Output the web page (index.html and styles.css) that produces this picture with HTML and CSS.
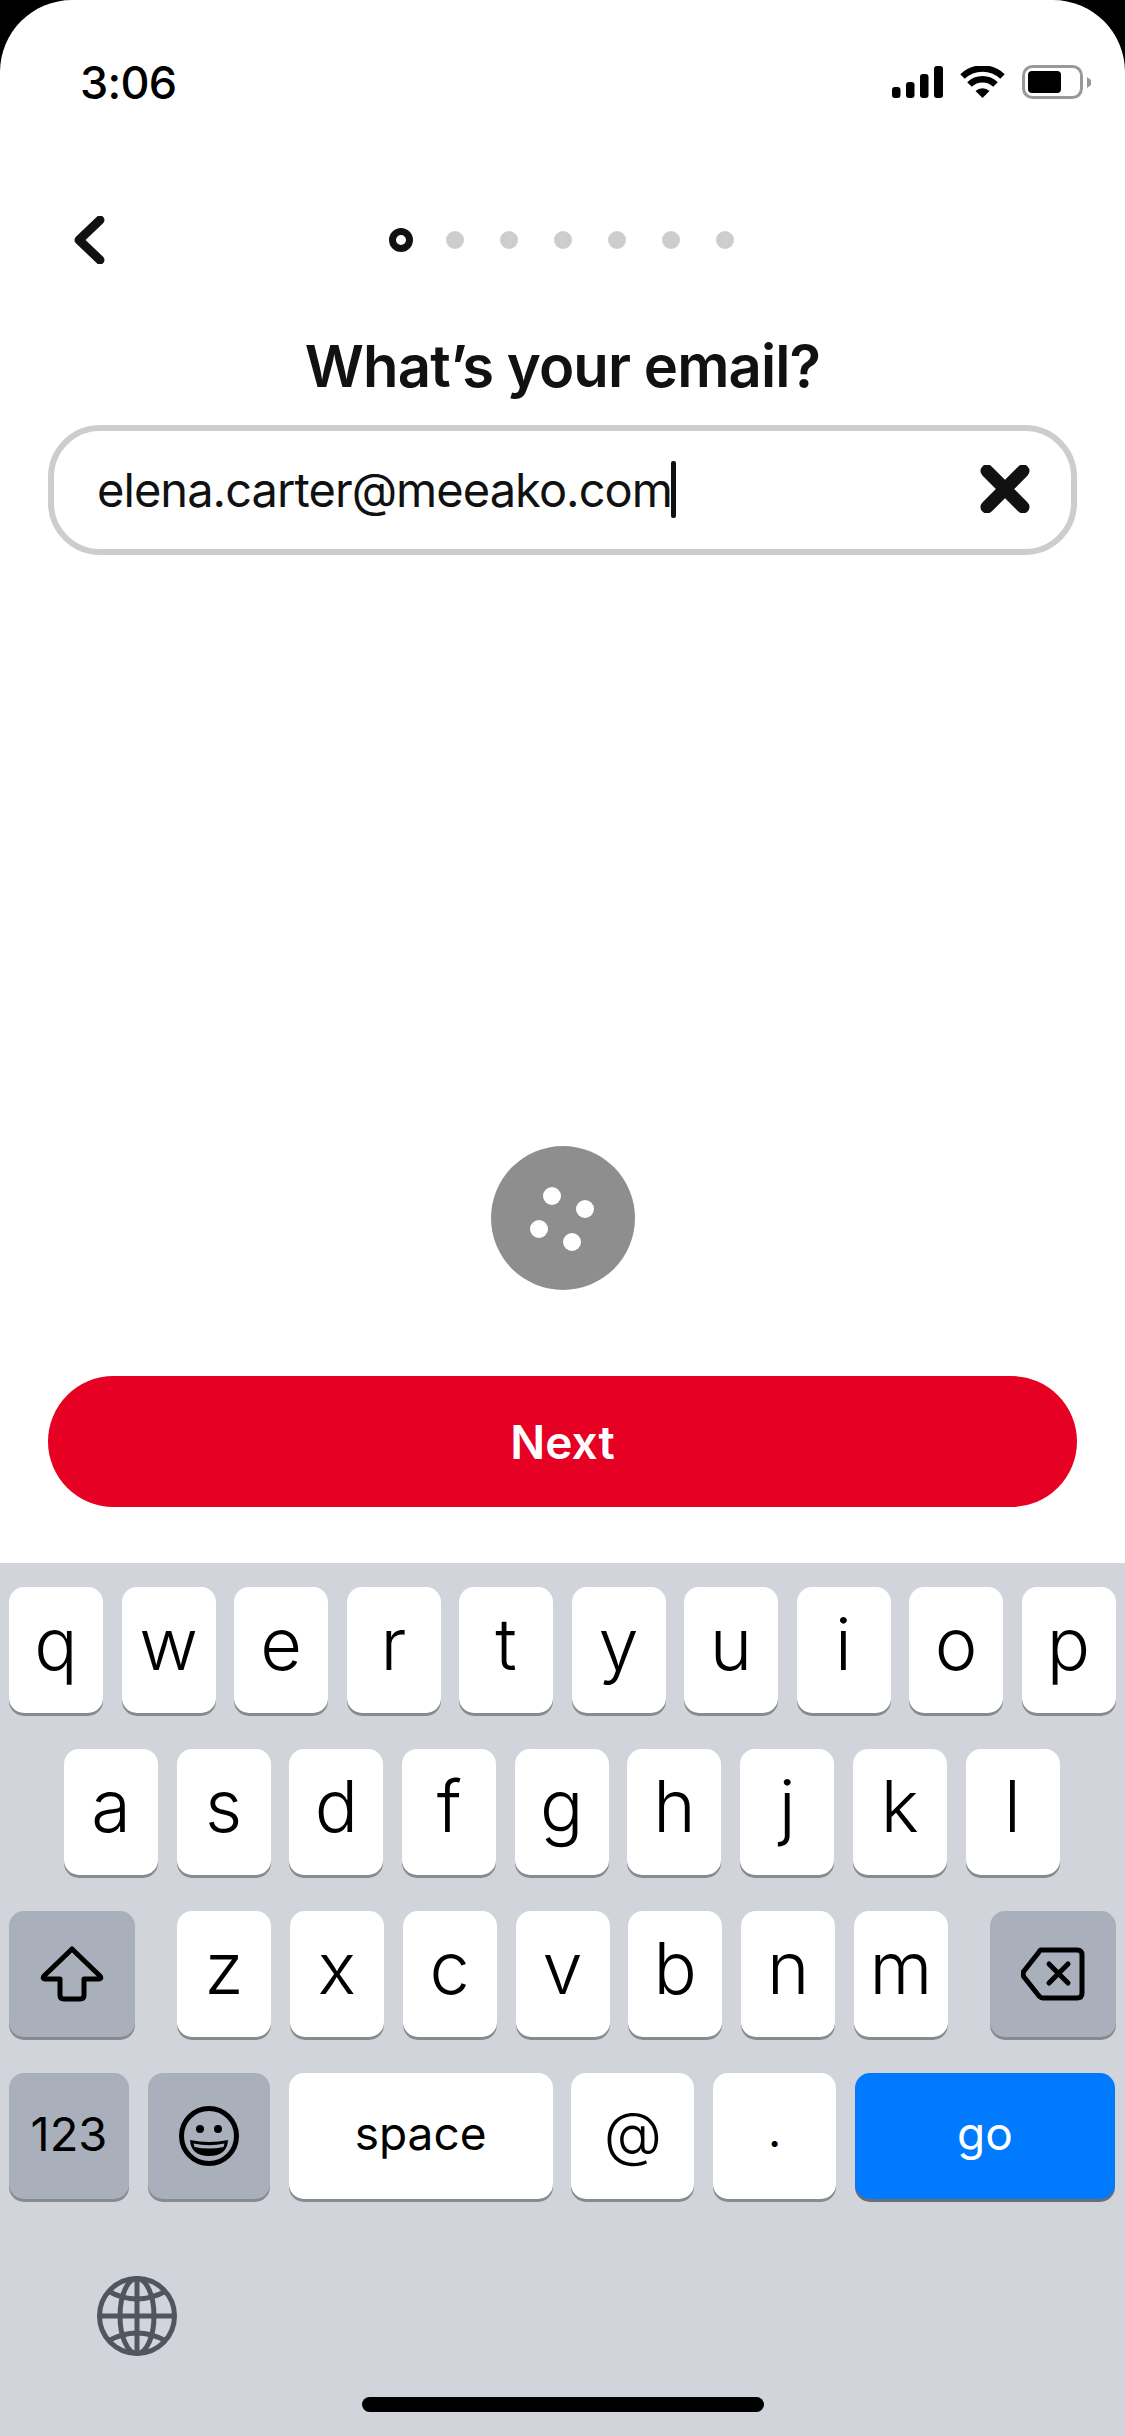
FILE: index.html
```html
<!DOCTYPE html>
<html>

<head>
    <title>What's your email?</title>
    <link rel="stylesheet" href="styles.css">
</head>

<body>
    <div class="screen">

        <!-- Status bar -->
        <div class="status-bar">
            <span class="time">3:06</span>
            <div class="status-icons">
                <svg class="signal" width="51" height="32" viewBox="0 0 51 32">
                    <rect x="0" y="21" width="8.5" height="11" rx="3" />
                    <rect x="14" y="16" width="8.5" height="16" rx="3" />
                    <rect x="28" y="8" width="8.5" height="24" rx="3" />
                    <rect x="42" y="0" width="9" height="32" rx="3" />
                </svg>
                <svg class="wifi" width="45" height="32" viewBox="0 0 45 32">
                    <path d="M22.5 32 L15.5 25 A10 10 0 0 1 29.5 25 Z" />
                    <path class="wifi-arc" d="M9.5 18.5 A18.5 18.5 0 0 1 35.5 18.5" />
                    <path class="wifi-arc" d="M2.5 10.5 A29 29 0 0 1 42.5 10.5" />
                </svg>
                <svg class="battery" width="69" height="34" viewBox="0 0 69 34">
                    <rect class="battery-shell" x="1.5" y="1.5" width="58" height="31" rx="9" />
                    <rect x="6" y="6" width="33" height="22" rx="4" />
                    <path class="battery-nub" d="M65 12 L69 15 V20 L65 23 Z" />
                </svg>
            </div>
        </div>

        <!-- Steps -->
        <div class="nav">
            <svg class="back" width="32" height="48" viewBox="0 0 32 48">
                <path d="M27 4 L6 24 L27 44" />
            </svg>
            <div class="steps">
                <span class="step active"></span>
                <span class="step"></span>
                <span class="step"></span>
                <span class="step"></span>
                <span class="step"></span>
                <span class="step"></span>
                <span class="step"></span>
            </div>
        </div>

        <div class="content">
            <h2>What’s your email?</h2>

            <div class="email-field">
                <span class="email-text">elena.carter@meeako.com</span>
                <span class="caret"></span>
                <svg class="clear" width="50" height="48" viewBox="0 0 50 48">
                    <path d="M7 6 L43 42 M43 6 L7 42" />
                </svg>
            </div>

            <svg class="spinner" width="144" height="144" viewBox="0 0 144 144">
                <circle class="spinner-disc" cx="72" cy="72" r="72" />
                <circle cx="61" cy="50" r="9" />
                <circle cx="94" cy="63" r="9" />
                <circle cx="48" cy="83" r="9" />
                <circle cx="81" cy="96" r="9" />
            </svg>

            <button class="next">Next</button>
        </div>

        <!-- Keyboard -->
        <div class="keyboard">
            <div class="row row-top">
                <div class="key">q</div>
                <div class="key">w</div>
                <div class="key">e</div>
                <div class="key">r</div>
                <div class="key">t</div>
                <div class="key">y</div>
                <div class="key">u</div>
                <div class="key">i</div>
                <div class="key">o</div>
                <div class="key">p</div>
            </div>
            <div class="row row-middle">
                <div class="key">a</div>
                <div class="key">s</div>
                <div class="key">d</div>
                <div class="key">f</div>
                <div class="key">g</div>
                <div class="key">h</div>
                <div class="key">j</div>
                <div class="key">k</div>
                <div class="key">l</div>
            </div>
            <div class="row row-bottom">
                <div class="key key-dark key-wide">
                    <svg width="64" height="56" viewBox="0 0 64 56">
                        <path d="M32 3 L60 30 Q62 33 59 33 H44 V49 Q44 53 40 53 H24 Q20 53 20 49 V33 H5 Q2 33 4 30 Z" />
                    </svg>
                </div>
                <div class="letters">
                    <div class="key">z</div>
                    <div class="key">x</div>
                    <div class="key">c</div>
                    <div class="key">v</div>
                    <div class="key">b</div>
                    <div class="key">n</div>
                    <div class="key">m</div>
                </div>
                <div class="key key-dark key-wide">
                    <svg width="64" height="54" viewBox="0 0 64 54">
                        <path d="M20 3 H56 Q61 3 61 8 V46 Q61 51 56 51 H22 Q20 51 18 49 L3 30 Q1 27 3 24 L18 5 Q19 3 20 3 Z" />
                        <path d="M28 17 L47 36 M47 17 L28 36" />
                    </svg>
                </div>
            </div>
            <div class="row row-actions">
                <div class="key key-dark key-small key-num">123</div>
                <div class="key key-dark key-small key-emoji">
                    <svg width="60" height="60" viewBox="0 0 60 60">
                        <circle class="face" cx="30" cy="30" r="27.5" />
                        <circle class="eye" cx="21" cy="23" r="4" />
                        <circle class="eye" cx="39" cy="23" r="4" />
                        <path class="mouth" d="M11 34 Q30 38 49 34 Q48 50 30 50 Q12 50 11 34 Z" />
                        <path class="teeth" d="M14.5 37.5 Q30 41 45.5 37.5 L44.5 41 Q30 44 15.5 41 Z" />
                    </svg>
                </div>
                <div class="key key-small key-space">space</div>
                <div class="key key-small key-at">@</div>
                <div class="key key-small key-dot">.</div>
                <div class="key key-small key-go">go</div>
            </div>
            <svg class="globe" width="80" height="80" viewBox="0 0 80 80">
                <circle cx="40" cy="40" r="37.5" />
                <ellipse cx="40" cy="40" rx="17" ry="37.5" />
                <path d="M40 2 V78 M2 40 H78" />
                <path d="M11 15 Q40 31 69 15 M11 65 Q40 49 69 65" />
            </svg>
            <div class="home-bar"></div>
        </div>

    </div>
</body>

</html>
```

FILE: styles.css
```css
* {
    box-sizing: border-box;
}

body {
    margin: 0;
    width: 1125px;
    height: 2436px;
    background-color: #000;
    font-family: Inter, 'Liberation Sans', sans-serif;
    color: #111;
    overflow: hidden;
}

.screen {
    display: flex;
    flex-direction: column;
    width: 1125px;
    height: 2436px;
    background-color: #fff;
    border-radius: 72px 72px 0 0;
    overflow: hidden;
}

/* Status bar */
.status-bar {
    display: flex;
    justify-content: space-between;
    align-items: center;
    height: 52px;
    margin-top: 56px;
    padding: 0 34px 0 80px;
}

.time {
    font-size: 45px;
    font-weight: 500;
    letter-spacing: -0.7px;
    color: #000;
}

.status-icons {
    display: flex;
    align-items: center;
    gap: 17px;
}

.wifi-arc {
    fill: none;
    stroke: #000;
    stroke-width: 6.5;
}

.battery-shell {
    fill: none;
    stroke: #999;
    stroke-width: 3;
}

.battery-nub {
    fill: #999;
}

/* Steps */
.nav {
    position: relative;
    display: flex;
    justify-content: center;
    align-items: center;
    height: 60px;
    margin-top: 102px;
}

.back {
    position: absolute;
    left: 73px;
    top: 6px;
}

.back path {
    fill: none;
    stroke: #111;
    stroke-width: 9;
    stroke-linecap: round;
    stroke-linejoin: round;
}

.steps {
    display: flex;
    align-items: center;
    gap: 36px;
    margin-left: -3px;
}

.step {
    width: 18px;
    height: 18px;
    border-radius: 50%;
    background-color: #cdcdcd;
}

.step.active {
    width: 24px;
    height: 24px;
    margin-right: -3px;
    background-color: #fff;
    border: 7px solid #111;
}

/* Form */
.content {
    flex: 1;
    display: flex;
    flex-direction: column;
    align-items: center;
    padding: 0 48px;
}

h2 {
    margin: 0;
    padding-top: 62px;
    font-size: 58px;
    line-height: 68px;
    font-weight: 600;
    letter-spacing: -0.9px;
    color: #111;
}

.email-field {
    display: flex;
    align-items: center;
    width: 1029px;
    height: 130px;
    margin-top: 25px;
    padding: 0 43px 2px;
    border: 6px solid #cdcdcd;
    border-radius: 52px;
}

.email-text {
    font-size: 47px;
    letter-spacing: -0.95px;
    color: #111;
}

.caret {
    width: 5px;
    height: 57px;
    margin-left: -1px;
    border-radius: 2px;
    background-color: #111;
}

.clear {
    margin-left: auto;
    margin-right: -2px;
}

.clear path {
    fill: none;
    stroke: #111;
    stroke-width: 13;
    stroke-linecap: round;
}

.spinner {
    flex: none;
    margin-top: auto;
    fill: #fff;
}

.spinner-disc {
    fill: #8e8e8e;
}

.next {
    flex: none;
    width: 1029px;
    height: 131px;
    margin-top: 86px;
    margin-bottom: 56px;
    border: none;
    border-radius: 66px;
    background-color: #e60023;
    color: #fff;
    font-family: inherit;
    font-size: 46px;
    font-weight: 600;
}

/* Keyboard */
.keyboard {
    flex: none;
    display: flex;
    flex-direction: column;
    height: 873px;
    padding-top: 24px;
    background-color: #d1d4db;
}

.row {
    display: flex;
    height: 126px;
    margin-bottom: 36px;
}

.row-top {
    gap: 18.5px;
    padding-left: 9px;
}

.row-middle {
    gap: 18.7px;
    padding-left: 64px;
}

.row-bottom {
    justify-content: space-between;
    padding: 0 9px;
}

.row-actions {
    justify-content: space-between;
    padding: 0 10px 0 9px;
    margin-bottom: 0;
}

.letters {
    display: flex;
    gap: 18.8px;
}

.key {
    display: flex;
    justify-content: center;
    align-items: center;
    flex: none;
    width: 94px;
    height: 126px;
    padding-bottom: 13px;
    border-radius: 15px;
    background-color: #fff;
    box-shadow: 0 3px 0 #898a8d;
    color: #000;
    font-size: 72px;
    font-weight: 350;
}

.key-dark {
    background-color: #a9afbb;
}

.key-wide {
    width: 126px;
    padding-bottom: 6px;
}

.key-small {
    padding-bottom: 6px;
    font-size: 46px;
    font-weight: 400;
}

.key svg {
    margin-top: 6px;
    fill: none;
    stroke: #000;
    stroke-width: 5;
    stroke-linejoin: round;
    stroke-linecap: round;
}

.key-num {
    width: 120px;
    font-size: 47px;
}

.key-emoji {
    width: 122px;
}

.key .face {
    fill: none;
    stroke: #000;
    stroke-width: 5;
}

.key .eye,
.key .mouth {
    fill: #000;
    stroke: none;
}

.key .teeth {
    fill: #a9afbb;
    stroke: none;
}

.key-space {
    width: 264px;
}

.key-at {
    width: 123px;
    font-size: 60px;
    font-weight: 350;
}

.key-dot {
    width: 123px;
    padding-bottom: 12px;
}

.key-go {
    width: 260px;
    background-color: #007aff;
    box-shadow: 0 3px 0 #6a6d74;
    color: #fff;
}

.globe {
    flex: none;
    margin: 77px 0 0 97px;
    fill: none;
    stroke: #50555f;
    stroke-width: 5;
}

.home-bar {
    flex: none;
    align-self: center;
    width: 402px;
    height: 15px;
    margin-top: 41px;
    border-radius: 8px;
    background-color: #000;
}
```
